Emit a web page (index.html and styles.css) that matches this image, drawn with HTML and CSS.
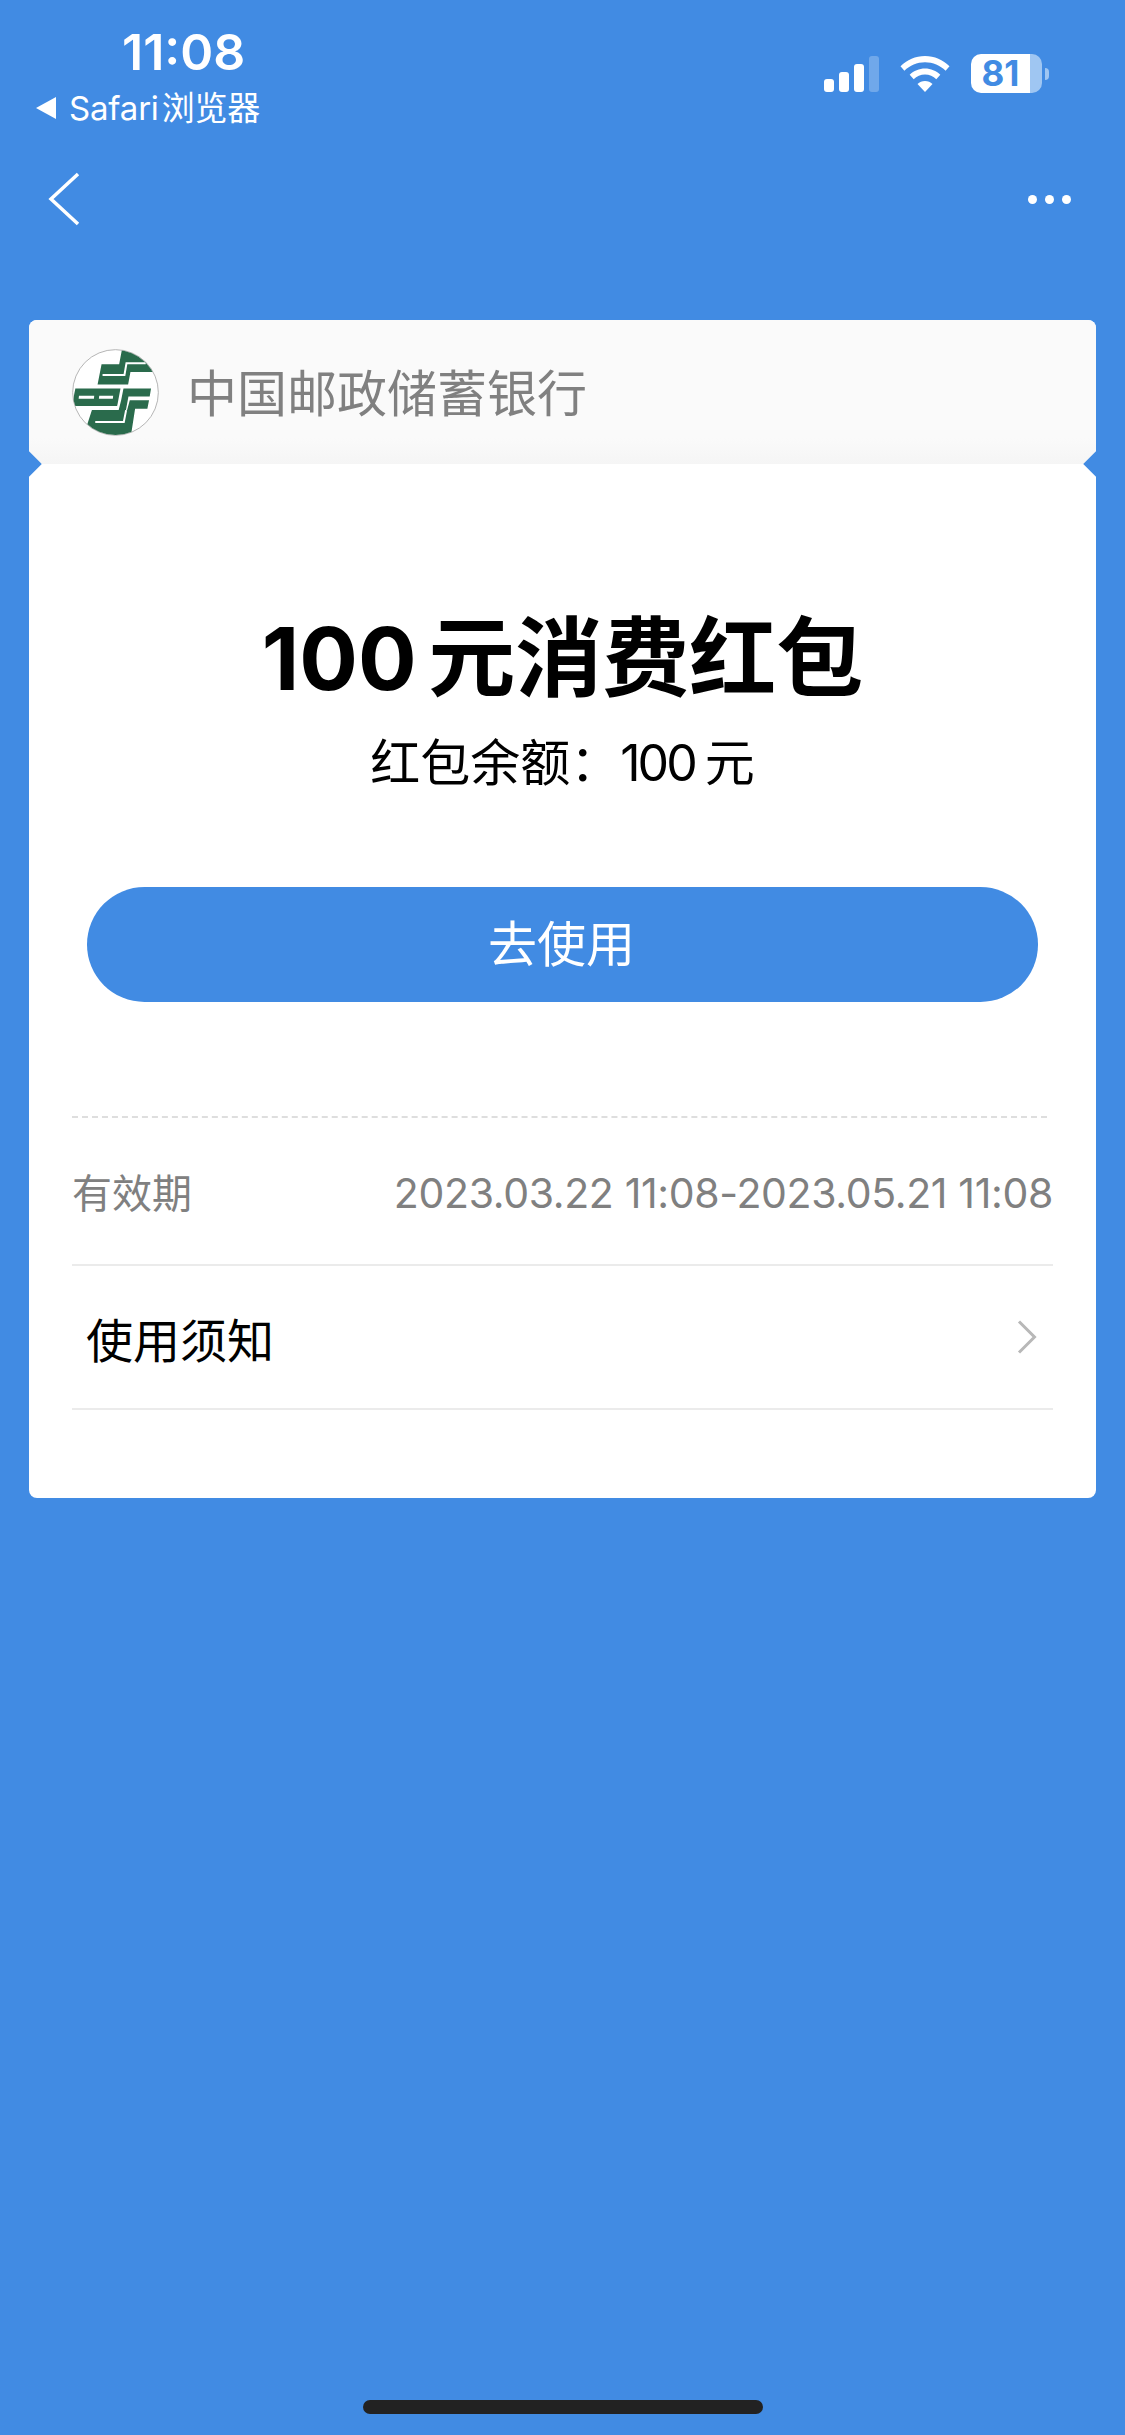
FILE: index.html
```html
<!DOCTYPE html>
<html lang="zh-CN">

<head>
    <meta charset="UTF-8">
    <meta name="viewport" content="width=device-width, initial-scale=1.0">
    <title>红包详情</title>
    <link rel="stylesheet" href="styles.css">
</head>

<body>
    <div class="page">

        <div class="statusBar">
            <div class="statusLeft">
                <div class="statusTime">11:08</div>
                <div class="statusBack"><span class="backTriangle"></span><span>Safari 浏览器</span></div>
            </div>
            <div class="statusRight">
                <div class="signal">
                    <span class="signalBar signalBar1"></span>
                    <span class="signalBar signalBar2"></span>
                    <span class="signalBar signalBar3"></span>
                    <span class="signalBar signalBar4"></span>
                </div>
                <svg class="wifi" viewBox="0 0 50 36" width="50" height="36">
                    <path fill="#fff" d="M25 0C34.500 0 43 3.800 49.500 10.200L45.600 14.700C40.200 9.400 33 6.200 25 6.200C17 6.200 9.800 9.400 4.400 14.700L.5 10.200C7 3.800 15.500 0 25 0Z" />
                    <path fill="#fff" d="M25 12.500C30.800 12.500 36.200 14.800 40.300 18.700L36.300 23.200C33.300 20.300 29.400 18.600 25 18.600C20.600 18.600 16.700 20.300 13.700 23.200L9.700 18.700C13.800 14.800 19.200 12.500 25 12.500Z" />
                    <path fill="#fff" d="M25 25C27.900 25 30.500 26.100 32.500 27.900L25 36L17.500 27.900C19.500 26.100 22.100 25 25 25Z" />
                </svg>
                <div class="battery">
                    <div class="batteryBody"><span class="batteryLevel">81</span></div>
                    <span class="batteryNub"></span>
                </div>
            </div>
        </div>

        <div class="navBar">
            <svg class="navBack" viewBox="0 0 32 54" width="32" height="54">
                <path d="M30 2L3 27L30 52" fill="none" stroke="#fff" stroke-width="3.500" />
            </svg>
            <div class="navMore">
                <span class="navDot"></span>
                <span class="navDot"></span>
                <span class="navDot"></span>
            </div>
        </div>

        <div class="card">
            <div class="cardHeader">
                <svg class="bankLogo" viewBox="36 26 262 262" width="87" height="87">
                    <defs>
                        <clipPath id="logoClip"><circle cx="167" cy="157" r="128" /></clipPath>
                    </defs>
                    <circle cx="167" cy="157" r="129" fill="#fff" stroke="#b5b5b5" stroke-width="3" />
                    <g clip-path="url(#logoClip)">
                        <path fill="#2a6b4c" d="M125 72H178L186 30H240L290 95H212L205 133H113Z" />
                        <path fill="none" stroke="#fff" stroke-width="6" d="M128 104H194L200 69H258" />
                        <path fill="#2a6b4c" d="M46 145H182L172 198H36Z" />
                        <path fill="#fff" d="M57 167H103L102 176H56ZM118 167H160L159 176H117Z" />
                        <path fill="#2a6b4c" d="M191 145H274L270 169H206L198 212H176L184 180Z" />
                        <path fill="#2a6b4c" d="M210 180H268L263 206H226L213 290H70L96 210H202Z" />
                        <path fill="none" stroke="#fff" stroke-width="6" d="M106 246H192L199 210" />
                    </g>
                </svg>
                <span class="bankName">中国邮政储蓄银行</span>
            </div>

            <div class="cardBody">
                <div class="couponTitle">100 元消费红包</div>
                <div class="couponBalance">红包余额：<span class="balanceNum">100</span> 元</div>
                <button class="useButton">去使用</button>
                <div class="dashLine"></div>
                <div class="infoRow">
                    <span class="infoLabel">有效期</span>
                    <span class="infoValue">2023.03.22 11:08-2023.05.21 11:08</span>
                </div>
                <div class="noticeRow">
                    <span class="noticeText">使用须知</span>
                    <svg class="noticeArrow" viewBox="0 0 20 34" width="20" height="34">
                        <path d="M2 1.500L17.500 17L2 32.500" fill="none" stroke="#b8b8b8" stroke-width="3" />
                    </svg>
                </div>
            </div>

            <span class="notch notchLeft"></span>
            <span class="notch notchRight"></span>
        </div>

        <div class="homeBar"></div>

    </div>
</body>

</html>
```

FILE: styles.css
```css
body,
html {
    margin: 0;
    padding: 0;
}

body {
    font-family: Inter, "Noto Sans CJK SC", sans-serif;
    background-color: #418be3;
    color: #000;
}

.page {
    display: flex;
    flex-direction: column;
    height: 2435px;
    overflow: hidden;
}

.statusBar {
    display: flex;
    justify-content: space-between;
    height: 130px;
    padding: 24px 76px 0 36px;
    box-sizing: border-box;
    color: #fff;
}

.statusTime {
    margin-left: 86px;
    font-size: 50px;
    line-height: 56px;
    font-weight: 600;
}

.statusBack {
    display: flex;
    align-items: center;
    gap: 13px;
    margin-top: 8px;
    font-size: 33px;
    line-height: 40px;
    word-spacing: -6px;
    letter-spacing: -0.2px;
}

.backTriangle {
    width: 0;
    height: 0;
    border-top: 11px solid transparent;
    border-bottom: 11px solid transparent;
    border-right: 20px solid #fff;
}

.statusRight {
    display: flex;
    align-items: flex-start;
    padding-top: 32px;
}

.signal {
    display: flex;
    align-items: flex-end;
    gap: 5px;
    height: 36px;
    margin-right: 21px;
}

.signalBar {
    width: 10px;
    background-color: #fff;
    border-radius: 3px;
}

.signalBar1 {
    height: 13px;
}

.signalBar2 {
    height: 20px;
}

.signalBar3 {
    height: 28px;
}

.signalBar4 {
    height: 36px;
    opacity: 0.25;
}

.wifi {
    margin-right: 21px;
}

.battery {
    display: flex;
    align-items: center;
    height: 39px;
    margin-top: -2px;
}

.batteryBody {
    width: 71px;
    height: 39px;
    border-radius: 10px;
    background: linear-gradient(to right, #fff 59px, #9fc6f2 59px);
}

.batteryLevel {
    display: block;
    width: 59px;
    text-align: center;
    font-size: 35px;
    line-height: 39px;
    font-weight: 700;
    color: #418be3;
}

.batteryNub {
    width: 4px;
    height: 12px;
    margin-left: 3px;
    border-radius: 0 6px 6px 0;
    background-color: #9fc6f2;
}

.navBar {
    display: flex;
    justify-content: space-between;
    align-items: center;
    height: 110px;
    padding: 0 54px 0 48px;
    margin-top: 14px;
    box-sizing: border-box;
}

.navMore {
    display: flex;
    gap: 8px;
}

.navDot {
    width: 9px;
    height: 9px;
    border-radius: 50%;
    background-color: #fff;
}

.card {
    position: relative;
    margin: 66px 29px 0;
    border-radius: 8px;
    background-color: #fff;
    overflow: hidden;
}

.cardHeader {
    display: flex;
    align-items: center;
    gap: 28px;
    height: 144px;
    padding: 0 0 0 43px;
    box-sizing: border-box;
    background: linear-gradient(to bottom, #fafafa 0, #fafafa 82%, #f5f5f5 100%);
}

.bankName {
    margin-bottom: 5px;
    font-size: 50px;
    color: #808080;
}

.notch {
    position: absolute;
    top: 135px;
    width: 18px;
    height: 18px;
    background-color: #418be3;
    transform: rotate(45deg);
}

.notchLeft {
    left: -9px;
}

.notchRight {
    right: -9px;
}

.cardBody {
    height: 1034px;
    padding: 140px 43px 0;
    box-sizing: border-box;
}

.couponTitle {
    text-align: center;
    font-size: 87px;
    line-height: 110px;
    font-weight: 700;
    word-spacing: -9px;
}

.couponBalance {
    margin-top: 19px;
    text-align: center;
    font-size: 50px;
    line-height: 60px;
    word-spacing: -4px;
}

.balanceNum {
    letter-spacing: -3px;
}

.useButton {
    display: block;
    width: 951px;
    height: 115px;
    margin: 94px 0 0 15px;
    padding: 0 2px 8px 0;
    border: none;
    border-radius: 58px;
    background-color: #418be3;
    color: #fff;
    font-family: inherit;
    font-size: 49px;
}

.dashLine {
    margin: 114px 6px 0 0;
    border-top: 2px dashed #dedede;
}

.infoRow {
    display: flex;
    justify-content: space-between;
    align-items: center;
    height: 148px;
    border-bottom: 2px solid #ebebeb;
    box-sizing: border-box;
    color: #808080;
}

.infoLabel {
    font-size: 40px;
}

.infoValue {
    margin-top: 4px;
    font-size: 41px;
    letter-spacing: -0.35px;
}

.noticeRow {
    display: flex;
    justify-content: space-between;
    align-items: center;
    height: 144px;
    padding: 0 16px 0 14px;
    border-bottom: 2px solid #ebebeb;
    box-sizing: border-box;
}

.noticeText {
    font-size: 47px;
}

.homeBar {
    width: 400px;
    height: 14px;
    margin: auto auto 21px;
    border-radius: 7px;
    background-color: #222;
}
```
